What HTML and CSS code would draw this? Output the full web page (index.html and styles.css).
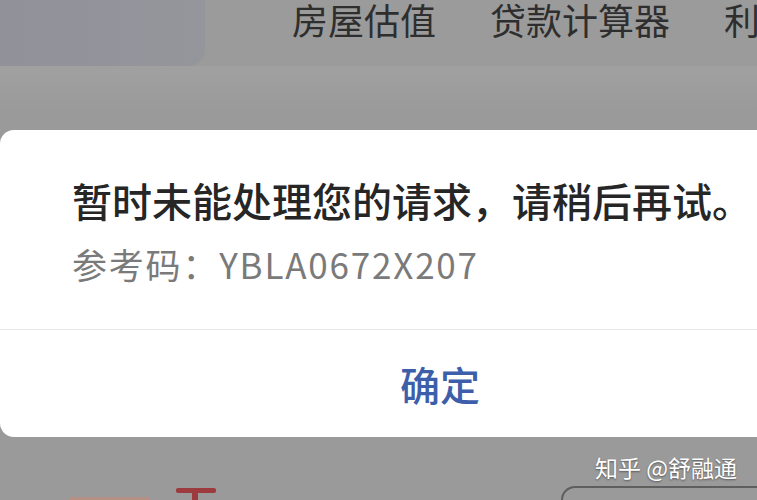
FILE: index.html
```html
<!DOCTYPE html>
<html lang="zh-CN">
<head>
<meta charset="utf-8">
<title>提示</title>
<link rel="stylesheet" href="styles.css">
</head>
<body>
<div class="screen">
  <header class="topbar">
    <div class="brand-tile"></div>
    <nav class="tabs">
      <span class="tab">房屋估值</span>
      <span class="tab">贷款计算器</span>
      <span class="tab">利</span>
    </nav>
  </header>
  <div class="page-body">
    <div class="promo">
      <span class="promo-bar"></span>
      <span class="promo-mark"></span>
    </div>
    <div class="pill"></div>
  </div>

  <div class="dialog" role="alertdialog">
    <div class="dialog-message">
      <p class="dialog-title">暂时未能处理您的请求，请稍后再试。</p>
      <p class="dialog-ref">参考码：YBLA0672X207</p>
    </div>
    <div class="dialog-actions">
      <button class="dialog-btn" type="button">确定</button>
    </div>
  </div>

  <div class="watermark">知乎 @舒融通</div>
</div>
</body>
</html>
```

FILE: styles.css
```css
html, body {
  margin: 0;
  padding: 0;
}

body {
  font-family: "Noto Sans CJK SC", "Noto Sans", sans-serif;
  background: #9a9a9a;
}

.screen {
  position: relative;
  width: 757px;
  height: 500px;
  overflow: hidden;
  background: #9a9a9a;
}

/* dimmed page behind the modal */
.topbar {
  display: flex;
  align-items: flex-start;
  height: 72px;
  background: linear-gradient(#9b9b9b 0 66px, #a0a0a0 66px 72px);
}

.brand-tile {
  flex: none;
  width: 205px;
  height: 66px;
  background: linear-gradient(90deg, #919199, #95959c);
  border-bottom-right-radius: 16px;
}

.tabs {
  flex: none;
  display: flex;
  gap: 54px;
  margin-left: 87px;
  white-space: nowrap;
}

.tab {
  font-size: 36px;
  line-height: 38px;
  color: #2e2e2e;
}

.page-body {
  display: flex;
  justify-content: space-between;
  align-items: flex-end;
  height: 428px;
  background: linear-gradient(#a0a0a0, #9a9a9a 40px);
}

.promo {
  display: flex;
  align-items: flex-end;
  gap: 26px;
  margin-left: 70px;
}

.promo-bar {
  width: 80px;
  height: 3px;
  background: #c98a78;
  opacity: 0.6;
}

.promo-mark {
  position: relative;
  width: 40px;
  height: 12px;
}

.promo-mark::before {
  content: "";
  position: absolute;
  left: 0;
  top: 0;
  width: 40px;
  height: 5px;
  border-radius: 2px;
  background: #9c3a3e;
}

.promo-mark::after {
  content: "";
  position: absolute;
  left: 16px;
  top: 4px;
  width: 6px;
  height: 8px;
  background: #9c3a3e;
}

.pill {
  width: 220px;
  height: 12px;
  margin-right: -28px;
  border: 2px solid #5e5e5e;
  border-bottom: none;
  border-radius: 30px 30px 0 0;
}

/* modal */
.dialog {
  position: absolute;
  left: 0;
  top: 130px;
  width: 880px;
  background: #ffffff;
  border-radius: 14px;
  overflow: hidden;
}

.dialog-message {
  padding: 46px 0 45px 72px;
  border-bottom: 1px solid #e8e8e8;
}

.dialog-title {
  margin: 0;
  font-size: 40px;
  line-height: 48px;
  font-weight: 500;
  color: #262626;
  white-space: nowrap;
}

.dialog-ref {
  margin: 20px 0 0;
  font-size: 35px;
  line-height: 40px;
  letter-spacing: 1.8px;
  color: #7a7a7a;
  white-space: nowrap;
}

.dialog-actions {
  display: flex;
  height: 107px;
}

.dialog-btn {
  width: 880px;
  height: 107px;
  padding: 0;
  border: none;
  background: transparent;
  font-family: inherit;
  font-size: 40px;
  font-weight: 500;
  color: #3d5fab;
}

.watermark {
  position: absolute;
  left: 595px;
  top: 451px;
  font-size: 23px;
  line-height: 32px;
  color: #ffffff;
  text-shadow: 0 1px 2px rgba(0, 0, 0, 0.45);
  white-space: nowrap;
}
```
